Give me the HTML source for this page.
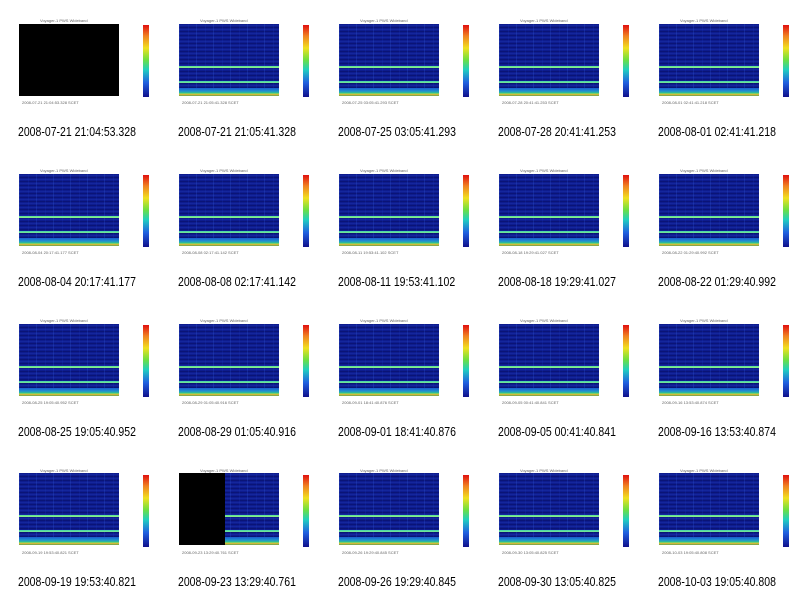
<!DOCTYPE html>
<html><head><meta charset="utf-8"><style>
*{margin:0;padding:0}
body{width:800px;height:596px;background:#fff;position:relative;overflow:hidden;font-family:"Liberation Sans",sans-serif}
.c{position:absolute;width:160px;height:150px}
.p{position:absolute;left:19px;top:24px;width:100px;height:72px;overflow:hidden;
background:
linear-gradient(to bottom,transparent 0,transparent 42px,#4fe0a0 42px,#9cf080 44px,transparent 44px,transparent 57px,#40d0b0 57px,#7ee890 59px,transparent 59px,transparent 64px,#1a5ad0 64px,#2090d0 67px,#30c090 69px,#c0e040 70px,#e09030 71px,#30c060 72px),
repeating-linear-gradient(90deg,rgba(50,90,220,.25) 0 1px,transparent 1px 9px,rgba(30,60,190,.2) 9px 10px,transparent 10px 17px),
repeating-linear-gradient(0deg,rgba(5,10,90,.45) 0 1px,transparent 1px 2px,rgba(40,70,200,.25) 2px 3px,transparent 3px 4px),
#0e1c8e}
.blk{position:absolute;left:0;top:0;bottom:0;background:#000}
.cb{position:absolute;left:143px;top:25px;width:6px;height:72px;background:linear-gradient(to bottom,#e01010,#f08020 15%,#f0e020 32%,#70e040 48%,#20d0c0 62%,#2060e0 80%,#10108c)}
.t{position:absolute;left:18px;top:125px;font-size:12.5px;white-space:nowrap;transform:scaleX(.84);transform-origin:0 0;color:#000}
.s{position:absolute;font-size:4px;color:#666;white-space:nowrap}
</style></head><body>
<div class="c" style="left:0;top:0"><div class="s" style="left:40px;top:18px">Voyager-1 PWS Wideband</div><div class="p"><div class="blk" style="right:0"></div></div><div class="cb"></div><div class="s" style="left:22px;top:100px">2008-07-21 21:04:53.328 SCET</div><div class="t">2008-07-21 21:04:53.328</div></div>
<div class="c" style="left:160px;top:0"><div class="s" style="left:40px;top:18px">Voyager-1 PWS Wideband</div><div class="p"></div><div class="cb"></div><div class="s" style="left:22px;top:100px">2008-07-21 21:05:41.328 SCET</div><div class="t">2008-07-21 21:05:41.328</div></div>
<div class="c" style="left:320px;top:0"><div class="s" style="left:40px;top:18px">Voyager-1 PWS Wideband</div><div class="p"></div><div class="cb"></div><div class="s" style="left:22px;top:100px">2008-07-25 03:05:41.293 SCET</div><div class="t">2008-07-25 03:05:41.293</div></div>
<div class="c" style="left:480px;top:0"><div class="s" style="left:40px;top:18px">Voyager-1 PWS Wideband</div><div class="p"></div><div class="cb"></div><div class="s" style="left:22px;top:100px">2008-07-28 20:41:41.253 SCET</div><div class="t">2008-07-28 20:41:41.253</div></div>
<div class="c" style="left:640px;top:0"><div class="s" style="left:40px;top:18px">Voyager-1 PWS Wideband</div><div class="p"></div><div class="cb"></div><div class="s" style="left:22px;top:100px">2008-08-01 02:41:41.218 SCET</div><div class="t">2008-08-01 02:41:41.218</div></div>

<div class="c" style="left:0;top:150px"><div class="s" style="left:40px;top:18px">Voyager-1 PWS Wideband</div><div class="p"></div><div class="cb"></div><div class="s" style="left:22px;top:100px">2008-08-04 20:17:41.177 SCET</div><div class="t">2008-08-04 20:17:41.177</div></div>
<div class="c" style="left:160px;top:150px"><div class="s" style="left:40px;top:18px">Voyager-1 PWS Wideband</div><div class="p"></div><div class="cb"></div><div class="s" style="left:22px;top:100px">2008-08-08 02:17:41.142 SCET</div><div class="t">2008-08-08 02:17:41.142</div></div>
<div class="c" style="left:320px;top:150px"><div class="s" style="left:40px;top:18px">Voyager-1 PWS Wideband</div><div class="p"></div><div class="cb"></div><div class="s" style="left:22px;top:100px">2008-08-11 19:53:41.102 SCET</div><div class="t">2008-08-11 19:53:41.102</div></div>
<div class="c" style="left:480px;top:150px"><div class="s" style="left:40px;top:18px">Voyager-1 PWS Wideband</div><div class="p"></div><div class="cb"></div><div class="s" style="left:22px;top:100px">2008-08-18 19:29:41.027 SCET</div><div class="t">2008-08-18 19:29:41.027</div></div>
<div class="c" style="left:640px;top:150px"><div class="s" style="left:40px;top:18px">Voyager-1 PWS Wideband</div><div class="p"></div><div class="cb"></div><div class="s" style="left:22px;top:100px">2008-08-22 01:29:40.992 SCET</div><div class="t">2008-08-22 01:29:40.992</div></div>

<div class="c" style="left:0;top:300px"><div class="s" style="left:40px;top:18px">Voyager-1 PWS Wideband</div><div class="p"></div><div class="cb"></div><div class="s" style="left:22px;top:100px">2008-08-25 19:05:40.952 SCET</div><div class="t">2008-08-25 19:05:40.952</div></div>
<div class="c" style="left:160px;top:300px"><div class="s" style="left:40px;top:18px">Voyager-1 PWS Wideband</div><div class="p"></div><div class="cb"></div><div class="s" style="left:22px;top:100px">2008-08-29 01:05:40.916 SCET</div><div class="t">2008-08-29 01:05:40.916</div></div>
<div class="c" style="left:320px;top:300px"><div class="s" style="left:40px;top:18px">Voyager-1 PWS Wideband</div><div class="p"></div><div class="cb"></div><div class="s" style="left:22px;top:100px">2008-09-01 18:41:40.876 SCET</div><div class="t">2008-09-01 18:41:40.876</div></div>
<div class="c" style="left:480px;top:300px"><div class="s" style="left:40px;top:18px">Voyager-1 PWS Wideband</div><div class="p"></div><div class="cb"></div><div class="s" style="left:22px;top:100px">2008-09-05 00:41:40.841 SCET</div><div class="t">2008-09-05 00:41:40.841</div></div>
<div class="c" style="left:640px;top:300px"><div class="s" style="left:40px;top:18px">Voyager-1 PWS Wideband</div><div class="p"></div><div class="cb"></div><div class="s" style="left:22px;top:100px">2008-09-16 13:53:40.874 SCET</div><div class="t">2008-09-16 13:53:40.874</div></div>

<div class="c" style="left:0;top:450px"><div class="s" style="left:40px;top:18px">Voyager-1 PWS Wideband</div><div class="p" style="top:23px"></div><div class="cb"></div><div class="s" style="left:22px;top:100px">2008-09-19 19:53:40.821 SCET</div><div class="t">2008-09-19 19:53:40.821</div></div>
<div class="c" style="left:160px;top:450px"><div class="s" style="left:40px;top:18px">Voyager-1 PWS Wideband</div><div class="p" style="top:23px"><div class="blk" style="width:46px"></div></div><div class="cb"></div><div class="s" style="left:22px;top:100px">2008-09-23 13:29:40.761 SCET</div><div class="t">2008-09-23 13:29:40.761</div></div>
<div class="c" style="left:320px;top:450px"><div class="s" style="left:40px;top:18px">Voyager-1 PWS Wideband</div><div class="p" style="top:23px"></div><div class="cb"></div><div class="s" style="left:22px;top:100px">2008-09-26 19:29:40.845 SCET</div><div class="t">2008-09-26 19:29:40.845</div></div>
<div class="c" style="left:480px;top:450px"><div class="s" style="left:40px;top:18px">Voyager-1 PWS Wideband</div><div class="p" style="top:23px"></div><div class="cb"></div><div class="s" style="left:22px;top:100px">2008-09-30 13:05:40.825 SCET</div><div class="t">2008-09-30 13:05:40.825</div></div>
<div class="c" style="left:640px;top:450px"><div class="s" style="left:40px;top:18px">Voyager-1 PWS Wideband</div><div class="p" style="top:23px"></div><div class="cb"></div><div class="s" style="left:22px;top:100px">2008-10-03 19:05:40.808 SCET</div><div class="t">2008-10-03 19:05:40.808</div></div>
</body></html>
